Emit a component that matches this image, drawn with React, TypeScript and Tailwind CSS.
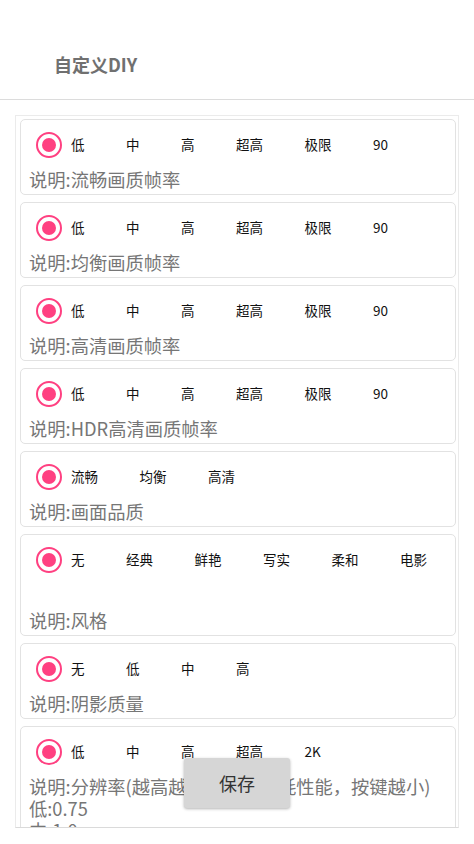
import React from "react";

const font = { fontFamily: '"Noto Sans CJK SC", "Noto Sans", sans-serif' };

type CardProps = {
  options: string[];
  desc: string;
  extra?: string[];
  tall?: boolean;
};

function Radio() {
  return (
    <div className="w-[26px] h-[26px] rounded-full border-[2.5px] border-[#ff4081] flex items-center justify-center shrink-0">
      <div className="w-[14px] h-[14px] rounded-full bg-[#ff4081]" />
    </div>
  );
}

function Card({ options, desc, extra, tall }: CardProps) {
  return (
    <div className="border-[1.5px] border-[#e2e2e2] rounded-[5px] bg-white pt-[11.5px] pb-[4.5px]">
      <div className="flex items-center h-[26px] pl-[15.5px]">
        <Radio />
        <div className="flex items-center gap-[41.5px] ml-[9px] text-[13.5px] text-[#111] leading-none pt-px">
          {options.map((o) => (
            <span key={o}>{o}</span>
          ))}
        </div>
      </div>
      <div
        className={`pl-[8.5px] text-[18.3px] leading-[22px] text-[#767676] whitespace-nowrap ${
          tall ? "mt-[36px]" : "mt-[10px]"
        }`}
      >
        <div>{desc}</div>
        {extra?.map((e) => (
          <div key={e}>{e}</div>
        ))}
      </div>
    </div>
  );
}

export default function App() {
  const fps = ["低", "中", "高", "超高", "极限", "90"];
  return (
    <div style={font} className="relative w-[474px] h-[844px] bg-white overflow-hidden">
      <div className="h-[100px] border-b border-[#dcdcdc] flex items-end pb-[21px] pl-[54px]">
        <span className="text-[18px] font-bold text-[#707070]">自定义DIY</span>
      </div>
      <div className="mx-[15px] mt-[15px] h-[713px] border-[1.5px] border-[#ebebeb] border-b-[#dadada] overflow-hidden pt-[3px] pl-[3.5px] pr-[2px]">
        <div className="flex flex-col gap-[7px]">
          <Card options={fps} desc="说明:流畅画质帧率" />
          <Card options={fps} desc="说明:均衡画质帧率" />
          <Card options={fps} desc="说明:高清画质帧率" />
          <Card options={fps} desc="说明:HDR高清画质帧率" />
          <Card options={["流畅", "均衡", "高清"]} desc="说明:画面品质" />
          <Card options={["无", "经典", "鲜艳", "写实", "柔和", "电影"]} desc="说明:风格" tall />
          <Card options={["无", "低", "中", "高"]} desc="说明:阴影质量" />
          <Card
            options={["低", "中", "高", "超高", "2K"]}
            desc="说明:分辨率(越高越清晰，越消耗性能，按键越小)"
            extra={["低:0.75", "中:1.0"]}
          />
        </div>
      </div>
      <button className="absolute left-1/2 -translate-x-1/2 bottom-[36px] w-[106px] h-[50px] bg-[#d6d6d6] rounded-[3px] shadow-[0_1px_3px_rgba(0,0,0,0.3)] text-[18px] text-[#333] flex items-center justify-center">
        保存
      </button>
    </div>
  );
}
